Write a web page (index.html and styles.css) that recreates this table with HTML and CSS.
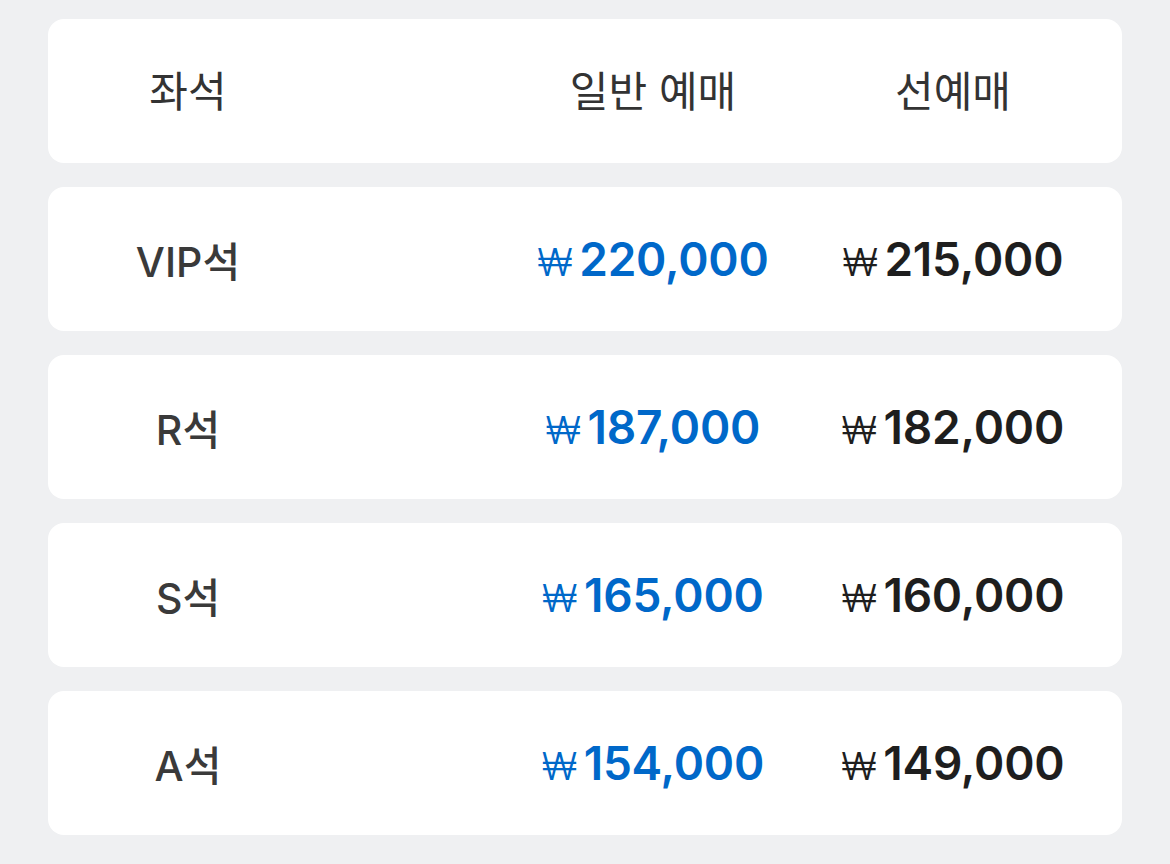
FILE: index.html
```html
<!DOCTYPE html>
<html lang="ko">
<head>
  <meta charset="UTF-8" />
  <meta name="viewport" content="width=device-width, initial-scale=1.0"/>
  <title>좌석 가격</title>
  <link rel="stylesheet" href="styles.css">
</head>
<body>

  <div class="price-table">
    <div class="row head">
      <div class="seat">좌석</div>
      <div class="spacer"></div>
      <div class="col">일반 예매</div>
      <div class="col">선예매</div>
    </div>

    <div class="row">
      <div class="seat">VIP석</div>
      <div class="spacer"></div>
      <div class="col price normal"><span class="won">₩</span>220,000</div>
      <div class="col price early"><span class="won">₩</span>215,000</div>
    </div>

    <div class="row">
      <div class="seat">R석</div>
      <div class="spacer"></div>
      <div class="col price normal"><span class="won">₩</span>187,000</div>
      <div class="col price early"><span class="won">₩</span>182,000</div>
    </div>

    <div class="row">
      <div class="seat">S석</div>
      <div class="spacer"></div>
      <div class="col price normal"><span class="won">₩</span>165,000</div>
      <div class="col price early"><span class="won">₩</span>160,000</div>
    </div>

    <div class="row">
      <div class="seat">A석</div>
      <div class="spacer"></div>
      <div class="col price normal"><span class="won">₩</span>154,000</div>
      <div class="col price early"><span class="won">₩</span>149,000</div>
    </div>
  </div>

</body>
</html>
```

FILE: styles.css
```css
body, html {
  margin: 0;
  padding: 0;
  height: 100%;
  background: #eff0f2;
  font-family: Inter, "Noto Sans CJK KR", sans-serif;
}

.price-table {
  display: flex;
  flex-direction: column;
  gap: 24px;
  padding: 19px 48px;
}

.row {
  display: grid;
  grid-template-columns: 280px 1fr 300px 300px;
  align-items: center;
  height: 144px;
  box-sizing: border-box;
  padding-right: 19px;
  background: #fff;
  border-radius: 16px;
}

.seat, .col {
  text-align: center;
  white-space: nowrap;
}

.seat {
  font-size: 41px;
  font-weight: 500;
  color: #3a3a3a;
}

.row.head {
  padding-bottom: 6px;
}

.head .seat, .head .col {
  font-size: 42px;
  font-weight: 400;
  color: #333;
}

.price {
  font-size: 46px;
  font-weight: 600;
  letter-spacing: -0.2px;
}

.won {
  font-size: 38px;
  font-weight: 300;
  margin-right: 7px;
}

.normal {
  color: #0068c9;
}

.early {
  color: #1e1e1e;
}
```
